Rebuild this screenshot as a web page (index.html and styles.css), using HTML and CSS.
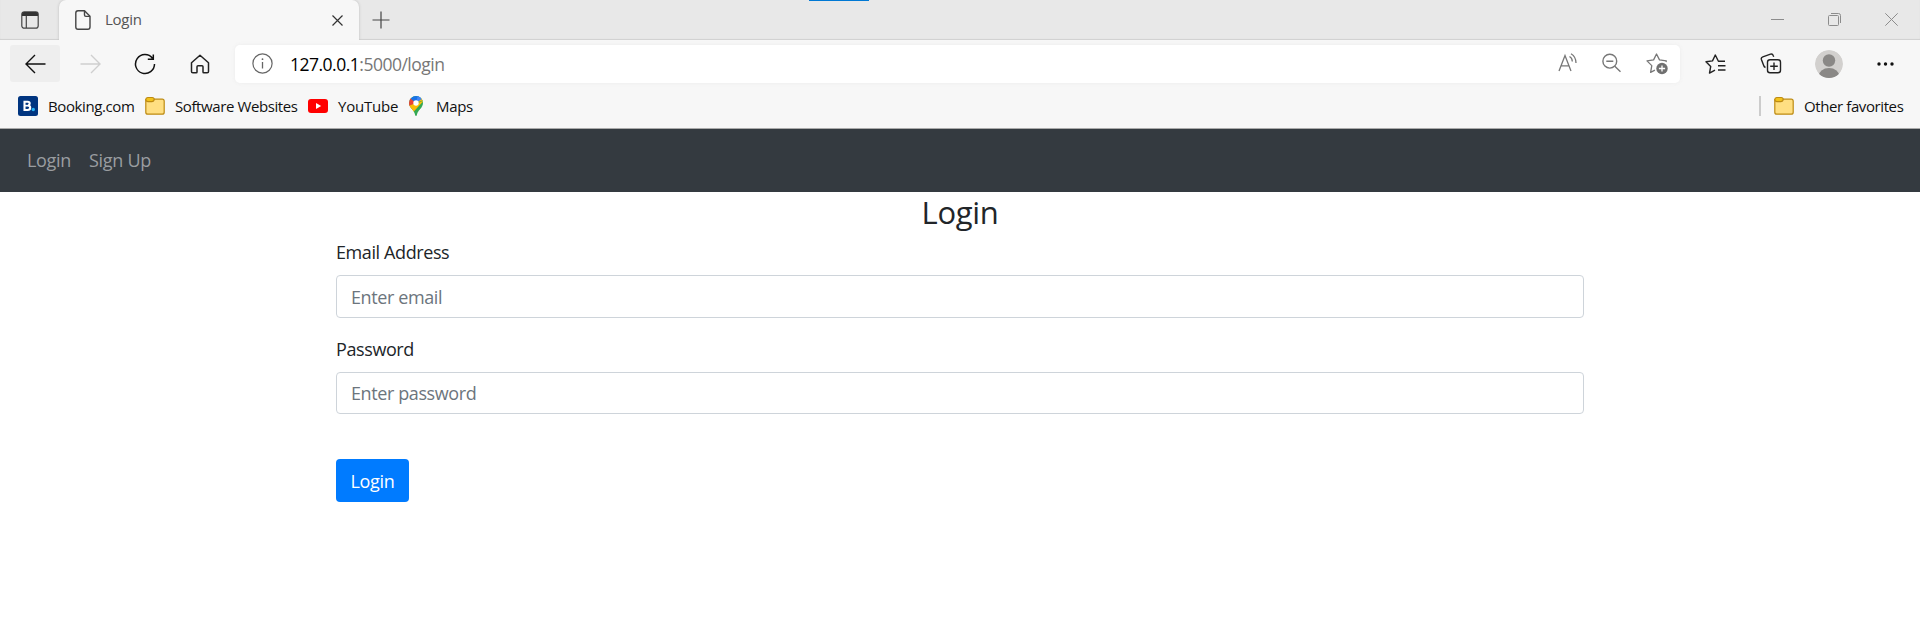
FILE: index.html
```html
<!DOCTYPE html>
<html lang="en">
<head>
<meta charset="utf-8">
<title>Login</title>
<link rel="stylesheet" href="styles.css">
</head>
<body>
<header class="browser">
  <div class="tabstrip">
    <svg class="tabmenu" width="18" height="18" viewBox="0 0 18 18"><rect x=".8" y=".8" width="16.4" height="16.4" rx="2.5" fill="none" stroke="#444" stroke-width="1.2"/><path d="M1 5V3q0-2 2-2h12q2 0 2 2v2z" fill="#333"/><path d="M5.3 5v12" stroke="#444" stroke-width="1.2"/></svg>
    <div class="tab">
      <svg width="16" height="20" viewBox="0 0 16 20" fill="none" stroke="#444" stroke-width="1.4" stroke-linejoin="round"><path d="M3 .8h6.5L15 6.300V17q0 2.200-2.200 2.200H3Q.8 19.200.8 17V3Q.8.8 3 .8z"/><path d="M9.500.8V5q0 1.400 1.400 1.400H15"/></svg>
      <span class="tabtitle">Login</span>
      <svg class="tabclose" width="11" height="11" viewBox="0 0 11 11"><path d="M.5.5l10 10m0-10l-10 10" stroke="#333" stroke-width="1.2"/></svg>
    </div>
    <svg class="newtab" width="18" height="18" viewBox="0 0 18 18"><path d="M9 .5v17M.5 9h17" stroke="#444" stroke-width="1.2"/></svg>
    <div class="winbtns">
      <svg width="13" height="13" viewBox="0 0 13 13"><path d="M0 6.500h13" stroke="#8c8c8c"/></svg>
      <svg width="13" height="13" viewBox="0 0 13 13" fill="none" stroke="#8c8c8c"><rect x=".5" y="2.500" width="10" height="10" rx="1"/><path d="M3 .5h7.500q2 0 2 2V10"/></svg>
      <svg width="13" height="13" viewBox="0 0 13 13"><path d="M.3.3l12.400 12.400m0-12.400L.3 12.700" stroke="#8c8c8c"/></svg>
    </div>
    <i class="accent"></i>
  </div>

  <div class="toolbar">
    <div class="back"><svg width="21" height="20" viewBox="0 0 21 20" fill="none" stroke="#111" stroke-width="1.4"><path d="M20.500 10H1M10 1L1 10l9 9"/></svg></div>
    <svg class="forward" width="21" height="20" viewBox="0 0 21 20" fill="none" stroke="#cfcfcf" stroke-width="1.4"><path d="M.5 10H20M11 1l9 9-9 9"/></svg>
    <svg class="reload" width="22" height="22" viewBox="0 0 22 22" fill="none" stroke="#111" stroke-width="1.500"><path d="M18.500 5.200A9.500 9.500 0 1 0 20.500 11M19.300 1.500V6.200h-5.500"/></svg>
    <svg class="home" width="20" height="20" viewBox="0 0 20 20" fill="none" stroke="#222" stroke-width="1.500" stroke-linejoin="round"><path d="M1.500 8.800L10 1.200l8.500 7.600V17.500q0 1.300-1.300 1.300h-3.400q-.8 0-.8-.8v-5.200q0-1-1-1H8q-1 0-1 1V18q0 .8-.8.8H2.800q-1.300 0-1.300-1.300z"/></svg>
    <div class="address">
      <svg class="info" width="21" height="21" viewBox="0 0 21 21" fill="none" stroke="#666"><circle cx="10.500" cy="10.500" r="9.600" stroke-width="1.200"/><path d="M10.500 9v6.500" stroke-width="1.300"/><circle cx="10.500" cy="6.200" r=".9" fill="#666" stroke="none"/></svg>
      <span class="url"><span class="host">127.0.0.1</span><span class="path">:5000/login</span></span>
      <div class="addressicons">
        <svg width="20" height="20" viewBox="0 0 20 20" fill="none" stroke="#777" stroke-width="1.300"><path d="M1 18L7 2.500 13 18M3 12.800h8M11.500 3.500q2.800 1.700 2.800 5M13 .7q5 3 5 9.300"/></svg>
        <svg width="20" height="20" viewBox="0 0 20 20" fill="none" stroke="#777" stroke-width="1.400"><circle cx="7.800" cy="8.200" r="6.900"/><path d="M12.800 13.200l5.700 5.500M4.300 8.200h7"/></svg>
        <svg width="22" height="22" viewBox="0 0 22 22" fill="none" stroke="#777" stroke-width="1.300"><path d="M20 9l.3-1.200-6.800-.9L10.500 1 7.600 6.900 1 7.900l4.800 4.700-1.200 6.700 4.300-2.200" stroke-linejoin="round"/><circle cx="16" cy="15.500" r="5.700" fill="#707070" stroke="none"/><path d="M16 12.400v6.200M12.900 15.500h6.200" stroke="#fff"/></svg>
      </div>
    </div>
    <div class="actions">
      <svg width="21" height="20" viewBox="0 0 21 20" fill="none" stroke="#222" stroke-width="1.400" stroke-linejoin="round"><path d="M20 7.300h-6.600L10.300 1 7.500 6.900 1 7.800l4.700 4.700-1.200 6.600 5.500-3"/><path d="M13 11.800h7.500M13 16h7.500"/></svg>
      <svg width="22" height="21" viewBox="0 0 22 21" fill="none" stroke="#222" stroke-width="1.400"><path d="M5.500 14.500Q4 14 3.500 12L1.400 6.500Q.8 4.500 2.800 3.800L10.500 1.200q2-.6 2.700 1.300l.5 1.200"/><rect x="7.500" y="6.800" width="13" height="13" rx="2.500"/><path d="M14 9.500v7.600M10.200 13.300h7.600"/></svg>
      <svg width="28" height="28" viewBox="0 0 28 28"><defs><clipPath id="avatar"><circle cx="14" cy="14" r="14"/></clipPath></defs><g clip-path="url(#avatar)"><circle cx="14" cy="14" r="14" fill="#d2d0ce"/><circle cx="14" cy="10.500" r="6.200" fill="#8a8886"/><ellipse cx="14" cy="26.500" rx="10.500" ry="8.500" fill="#8a8886"/></g></svg>
      <svg width="17" height="4" viewBox="0 0 17 4" fill="#111"><circle cx="2" cy="2" r="1.700"/><circle cx="8.500" cy="2" r="1.700"/><circle cx="15" cy="2" r="1.700"/></svg>
    </div>
  </div>

  <div class="favorites">
    <svg class="favicon" width="20" height="20" viewBox="0 0 20 20"><rect width="20" height="20" rx="2.500" fill="#003580"/><path d="M6.500 5.800h3.200q2 0 2 1.800 0 1.500-1.500 1.900 2 .3 2 2.300 0 2.200-2.500 2.200H6.500z" fill="none" stroke="#fff" stroke-width="2.100"/><path d="M6.500 9.700h4" stroke="#fff" stroke-width="1.700"/><circle cx="15.300" cy="13.500" r="1.700" fill="#27b4f5"/></svg>
    <span class="fav booking">Booking.com</span>
    <svg class="favicon" width="20" height="20" viewBox="0 0 20 20"><path d="M.8 3.500v12.700q0 2 2 2h14.400q2 0 2-2V5.200q0-2-2-2H8z" fill="#ffdf82" stroke="#bd8b13" stroke-width="1.200"/><path d="M2.800 1.500h4.500q1.600 0 2 1.700-.4 2.500-2.500 2.500H2.800Q.8 5.500.8 3.600T2.800 1.500z" fill="#f2c21c" stroke="#bd8b13" stroke-width="1.200"/></svg>
    <span class="fav software">Software Websites</span>
    <svg class="favicon" width="20" height="20" viewBox="0 0 20 20"><rect y="3" width="20" height="14" rx="3" fill="#f00"/><path d="M8 7v6l5.200-3z" fill="#fff"/></svg>
    <span class="fav youtube">YouTube</span>
    <svg class="pin" width="14" height="20" viewBox="0 0 14 20"><defs><clipPath id="pin"><path d="M7 0a7 7 0 0 1 7 7c0 5-5.500 7-6.200 12.200q-.2.800-.8.800t-.8-.8C5.500 14 0 12 0 7a7 7 0 0 1 7-7z"/></clipPath></defs><g clip-path="url(#pin)"><path d="M0 0h14v20H0z" fill="#34a853"/><path d="M7 7L14-1v6.500L2.500 18-3 10z" fill="#fbbc04"/><path d="M7 7l7.500-3L16 8l-6 6-3 8h9V4L9 7z" fill="#34a853"/><path d="M-1 10L7 7 1.500 2-2 4zM-1 12l6-7-4-3z" fill="#ea4335"/><path d="M1.500 2.400L7 7l5.500-6L7-2z" fill="#1a73e8"/><path d="M9-1L7 7l6-4z" fill="#4285f4"/></g><circle cx="7" cy="7" r="2.700" fill="#fff"/></svg>
    <span class="fav maps">Maps</span>
    <div class="other">
      <svg width="20" height="20" viewBox="0 0 20 20"><path d="M.8 3.500v12.700q0 2 2 2h14.400q2 0 2-2V5.200q0-2-2-2H8z" fill="#ffdf82" stroke="#bd8b13" stroke-width="1.200"/><path d="M2.800 1.500h4.500q1.600 0 2 1.700-.4 2.500-2.500 2.500H2.800Q.8 5.500.8 3.600T2.800 1.500z" fill="#f2c21c" stroke="#bd8b13" stroke-width="1.200"/></svg>
      <span class="fav otherlabel">Other favorites</span>
    </div>
  </div>
</header>

<nav class="navbar">
  <a class="navlink first">Login</a>
  <a class="navlink second">Sign Up</a>
</nav>

<main class="container">
  <h3 class="heading">Login</h3>
  <form class="form">
    <label class="label email" for="email">Email Address</label>
    <input class="control ememail" id="email" type="email" placeholder="Enter email">
    <label class="label pass" for="password">Password</label>
    <input class="control shorter" id="password" type="password" placeholder="Enter password">
    <button class="submit" type="button">Login</button>
  </form>
</main>
</body>
</html>
```
FILE: styles.css
```css
* { box-sizing: border-box; }
body {
  margin: 0;
  background: #fff;
  color: #212529;
  font-family: "Open Sans", "Noto Sans", sans-serif;
  font-size: 18px;
  overflow: hidden;
}
svg { display: block; flex: none; }
.browser {
  height: 129px;
  background: #f7f7f7;
  border-bottom: 1px solid #aaa;
}
.tabstrip {
  position: relative;
  display: flex;
  height: 40px;
  background: #e8e8e8;
  box-shadow: inset 0 -1px 1px #d0d0d0;
}
.tabmenu { margin: 11px 0 0 21px; }
.tab {
  display: flex;
  align-items: center;
  width: 300px;
  height: 40px;
  margin-left: 20px;
  padding: 0 16px;
  background: #f7f7f7;
  border-radius: 7px 7px 0 0;
  box-shadow: 0 0 3px #bbb;
  clip-path: inset(0 -4px 0 -4px);
}
.tabtitle {
  margin-left: 14px;
  color: #555;
  font-size: 15px;
  line-height: 38px;
  height: 40px;
  letter-spacing: -.25px;
}
.tabclose { margin-left: auto; }
.newtab { margin: 11px 0 0 13px; }
.winbtns {
  display: flex;
  gap: 44px;
  margin: 13px 22px 0 auto;
}
.accent {
  position: absolute;
  top: 0;
  left: 809px;
  width: 60px;
  height: 1px;
  background: #0078d4;
}
.toolbar {
  display: flex;
  align-items: center;
  height: 47px;
  padding: 0 24px 0 10px;
}
.back {
  display: flex;
  align-items: center;
  justify-content: center;
  width: 50px;
  height: 37px;
  background: #eee;
  border-radius: 3px;
}
.forward { margin-left: 20px; }
.reload { margin-left: 33px; }
.home { margin-left: 34px; }
.address {
  display: flex;
  align-items: center;
  width: 1445px;
  height: 38px;
  margin-left: 25px;
  padding: 0 12px 0 17px;
  background: #fff;
  border-radius: 5px;
  box-shadow: 0 0 4px #ececec;
}
.url {
  margin-left: 17px;
  font-size: 17.5px;
  line-height: 36px;
  letter-spacing: -.5px;
  color: #777;
}
.host { color: #000; }
.addressicons {
  display: flex;
  gap: 24px;
  margin-left: auto;
}
.actions {
  display: flex;
  flex: 1;
  align-items: center;
  justify-content: space-between;
  margin-left: 25px;
  padding-right: 2px;
}
.favorites {
  display: flex;
  align-items: center;
  height: 38px;
  padding: 0 18px;
}
.fav {
  margin-left: 10px;
  color: #111;
  font-size: 15px;
  line-height: 36px;
  white-space: nowrap;
}
.booking { width: 97px; letter-spacing: -.4px; }
.software { width: 133px; letter-spacing: -.4px; }
.youtube { width: 71px; letter-spacing: -.2px; }
.pin { margin-left: 0; }
.maps { margin-left: 13px; letter-spacing: -.3px; }
.other {
  display: flex;
  align-items: center;
  height: 20px;
  width: 143px;
  margin-left: auto;
  margin-right: 0;
  padding-left: 13px;
  border-left: 2px solid #ccc;
}
.otherlabel { letter-spacing: -.4px; }
.navbar {
  display: flex;
  height: 63px;
  padding-left: 27px;
  background: #343a40;
}
.navlink {
  color: #9a9da0;
  line-height: 63px;
  letter-spacing: -.3px;
}
.first { width: 62px; }
.container {
  width: 1248px;
  margin: 0 auto;
}
.heading {
  margin: 0;
  height: 46px;
  font-size: 31px;
  font-weight: 500;
  line-height: 40px;
  text-align: center;
  letter-spacing: -.3px;
}
.form {
  display: flex;
  flex-direction: column;
  align-items: flex-start;
}
.label {
  height: 37px;
  line-height: 28px;
  letter-spacing: -.4px;
}
.control {
  width: 100%;
  height: 43px;
  margin: 0 0 17px;
  padding: 0 14px;
  background: #fff;
  border: 1px solid #ced4da;
  border-radius: 4px;
  font: inherit;
  letter-spacing: -.4px;
}
.control::placeholder { color: #6c757d; opacity: 1; }
.shorter { height: 42px; margin-bottom: 45px; }
.submit {
  width: 73px;
  height: 43px;
  padding: 0;
  border: 0;
  border-radius: 4px;
  background: #007bff;
  color: #fff;
  font: inherit;
  letter-spacing: -.3px;
}
```
